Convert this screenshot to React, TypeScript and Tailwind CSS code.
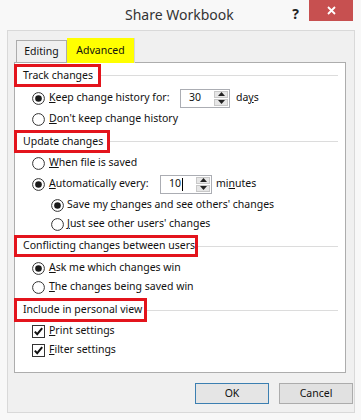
import React from 'react'

const font = { fontFamily: '"Noto Sans", "Open Sans", sans-serif' }

function Radio({ checked }: { checked?: boolean }) {
  return (
    <svg width="13" height="13" viewBox="0 0 13 13" className="shrink-0">
      <circle cx="6.5" cy="6.5" r="5.9" fill="#fff" stroke="#333" strokeWidth="1" />
      {checked && <circle cx="6.5" cy="6.5" r="3.3" fill="#1a1a1a" />}
    </svg>
  )
}

function Check() {
  return (
    <svg width="13" height="13" viewBox="0 0 13 13" className="shrink-0">
      <rect x="0.5" y="0.5" width="12" height="12" fill="#fff" stroke="#333" />
      <path d="M2.8 6.6 L5.2 9.2 L10.2 3.2" fill="none" stroke="#111" strokeWidth="2" />
    </svg>
  )
}

function Header({ label, width }: { label: string; width: number }) {
  return (
    <div className="flex items-center h-full">
      <div
        className="h-full border-[3px] border-[#e3141c] flex items-center pl-[6px] whitespace-nowrap shrink-0 ml-[-1px]"
        style={{ width }}
      >
        {label}
      </div>
      <div className="flex-1 h-px bg-[#dcdcdc] mr-[7px]" />
    </div>
  )
}

function Spin({ value, width, cursor }: { value: string; width: number; cursor?: boolean }) {
  return (
    <div
      className="h-[19px] border border-[#abadb3] bg-white flex items-center pl-[8px] pr-[1px] shrink-0"
      style={{ width }}
    >
      <span className="flex-1 flex items-center">
        {value}
        {cursor && <span className="w-px h-[13px] bg-black ml-px" />}
      </span>
      <div className="w-[14px] h-[15px] flex flex-col gap-px">
        <div className="flex-1 bg-[#e6e6e6] border border-[#c8c8c8] flex items-center justify-center">
          <svg width="7" height="4" viewBox="0 0 7 4"><path d="M0 4 L3.5 0 L7 4 Z" fill="#222" /></svg>
        </div>
        <div className="flex-1 bg-[#e6e6e6] border border-[#c8c8c8] flex items-center justify-center">
          <svg width="7" height="4" viewBox="0 0 7 4"><path d="M0 0 L3.5 4 L7 0 Z" fill="#222" /></svg>
        </div>
      </div>
    </div>
  )
}

export default function App() {
  return (
    <div
      className="w-[361px] h-[420px] bg-[#f8f8f8] text-[#111] text-[10.5px] overflow-hidden flex flex-col"
      style={font}
    >
      {/* Title bar */}
      <div className="h-[30px] flex items-start shrink-0">
        <div className="flex-1 pl-[125px] pt-[4px] text-[14px] text-[#333]">Share Workbook</div>
        <div className="pt-[3px] pr-[10px] text-[14px] font-bold text-[#222]">?</div>
        <div className="w-[44px] h-[21px] bg-[#c75050] mr-[8px] flex items-center justify-center">
          <svg width="9" height="9" viewBox="0 0 9 9">
            <path d="M1 1 L8 8 M8 1 L1 8" stroke="#fff" strokeWidth="1.8" />
          </svg>
        </div>
      </div>

      {/* Client area */}
      <div className="ml-[7px] w-[348px] h-[383px] bg-[#f0f0f0] border border-[#d9d9d9] flex flex-col pl-[6px] pt-[7px]">
        {/* Tabs */}
        <div className="flex items-end h-[24px] pl-[2px]">
          <div className="w-[51px] h-[22px] border border-b-0 border-[#acacac] bg-[#f0f0f0] flex items-center justify-center">
            Editing
          </div>
          <div className="w-[68px] h-[25px] bg-[#ffff00] border-r border-[#d6d6d6] flex items-center justify-center mb-[-1px] relative z-10">
            Advanced
          </div>
        </div>

        {/* Panel */}
        <div className="w-[332px] h-[311px] bg-white border border-[#adadad] flex flex-col">
          <div className="h-[23px] mt-[1px]">
            <Header label="Track changes" width={87} />
          </div>
          <div className="h-[22px] flex items-center pl-[17px] gap-[4px]">
            <Radio checked />
            <span className="w-[127px] whitespace-nowrap"><u>K</u>eep change history for:</span>
            <Spin value="30" width={50} />
            <span className="ml-[2px]">da<u>y</u>s</span>
          </div>
          <div className="h-[20px] flex items-center pl-[17px] gap-[4px]">
            <Radio />
            <span><u>D</u>on't keep change history</span>
          </div>

          <div className="h-[23px] mt-[1px]">
            <Header label="Update changes" width={96} />
          </div>
          <div className="h-[20px] flex items-center pl-[17px] gap-[4px]">
            <Radio />
            <span><u>W</u>hen file is saved</span>
          </div>
          <div className="h-[22px] flex items-center pl-[17px] gap-[4px]">
            <Radio checked />
            <span className="w-[107px] whitespace-nowrap"><u>A</u>utomatically every:</span>
            <Spin value="10" width={52} cursor />
            <span>mi<u>n</u>utes</span>
          </div>
          <div className="h-[20px] flex items-center pl-[36px] gap-[3px]">
            <Radio checked />
            <span>Save my <u>c</u>hanges and see others' changes</span>
          </div>
          <div className="h-[18px] flex items-center pl-[36px] gap-[3px]">
            <Radio />
            <span><u>J</u>ust see other users' changes</span>
          </div>

          <div className="h-[22px] mt-[2px]">
            <Header label="Conflicting changes between users" width={184} />
          </div>
          <div className="h-[22px] flex items-center pl-[17px] gap-[4px]">
            <Radio checked />
            <span><u>A</u>sk me which changes win</span>
          </div>
          <div className="h-[16px] flex items-center pl-[17px] gap-[4px]">
            <Radio />
            <span><u>T</u>he changes being saved win</span>
          </div>

          <div className="h-[24px] mt-[3px]">
            <Header label="Include in personal view" width={133} />
          </div>
          <div className="h-[18px] flex items-center pl-[17px] gap-[4px]">
            <Check />
            <span><u>P</u>rint settings</span>
          </div>
          <div className="h-[20px] flex items-center pl-[17px] gap-[4px]">
            <Check />
            <span><u>F</u>ilter settings</span>
          </div>
        </div>

        {/* Buttons */}
        <div className="flex justify-end gap-[10px] mt-[10px] pr-[1px]">
          <div className="w-[74px] h-[21px] border border-[#3c7fb1] bg-[#e5e5e5] flex items-center justify-center">
            OK
          </div>
          <div className="w-[74px] h-[21px] border border-[#acacac] bg-[#e1e1e1] flex items-center justify-center">
            Cancel
          </div>
        </div>
      </div>
    </div>
  )
}
